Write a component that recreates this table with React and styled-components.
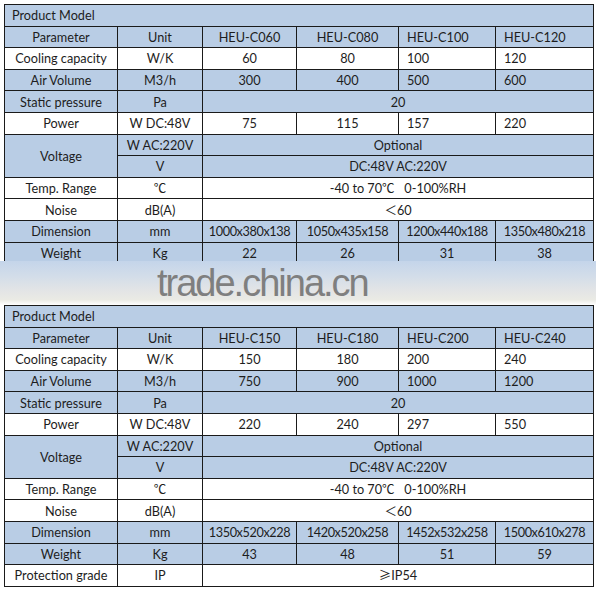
import React from "react";
import styled, { createGlobalStyle } from "styled-components";

const Global = createGlobalStyle`
  html, body { margin: 0; padding: 0; background: #ffffff; }
  body { font-family: Lato, "Open Sans", sans-serif; }
`;

const Page = styled.div`
  width: 596px;
  height: 590px;
  padding: 4px 0 0 4px;
  box-sizing: border-box;
  overflow: hidden;
`;

const Clip = styled.div`
  height: ${(p) => p.$h}px;
  overflow: hidden;
`;

const Table = styled.table`
  border-collapse: collapse;
  width: 589px;
  table-layout: fixed;
  font-family: Lato, "Noto Sans CJK SC", sans-serif;
  font-size: 12.7px;
  color: #1d1d1d;
`;

const Row = styled.tr`
  height: 21.6px;
  background: ${(p) => (p.$blue ? "#b9cde5" : "#ffffff")};
`;

const Cell = styled.td`
  border: 1px solid #1a1a1a;
  padding: ${(p) => (p.$left ? "0 0 0 8px" : p.$title ? "0 0 0 7px" : "0")};
  text-align: ${(p) => (p.$left || p.$title ? "left" : "center")};
  letter-spacing: ${(p) => (p.$tight ? "-0.4px" : "0")};
  white-space: nowrap;
  line-height: 20px;
  vertical-align: middle;
`;

const Cjk = styled.span`
  font-family: "Noto Sans CJK SC", sans-serif;
  font-size: 12.5px;
`;

const Band = styled.div`
  height: 44px;
  margin-left: -4px;
  width: 596px;
  background: linear-gradient(
    to bottom,
    #c4d5ea 0%,
    #d3dde9 35%,
    #e2e4e6 65%,
    #eaeae4 88%,
    #ffffff 100%
  );
  display: flex;
  align-items: center;
  padding-left: 157px;
  box-sizing: border-box;
`;

const Mark = styled.span`
  font-family: "Liberation Sans", Arial, sans-serif;
  font-size: 38px;
  letter-spacing: -2px;
  color: #7f7f7f;
  margin-top: 0px;
`;

const Cols = () => (
  <colgroup>
    {[113, 85, 94, 102, 97, 98].map((w, i) => (
      <col key={i} style={{ width: w }} />
    ))}
  </colgroup>
);

function Spec({ models, cooling, air, power, dims, weights, protection }) {
  const leftIdx = (i) => i >= 2;
  const valueRow = (label, unit, vals, blue) => (
    <Row $blue={blue}>
      <Cell>{label}</Cell>
      <Cell>{unit}</Cell>
      {vals.map((v, i) => (
        <Cell key={i} $left={leftIdx(i)}>
          {v}
        </Cell>
      ))}
    </Row>
  );
  const centerRow = (label, unit, vals, blue, tight) => (
    <Row $blue={blue}>
      <Cell>{label}</Cell>
      <Cell>{unit}</Cell>
      {vals.map((v, i) => (
        <Cell key={i} $tight={tight}>
          {v}
        </Cell>
      ))}
    </Row>
  );
  const spanRow = (label, unit, content, blue) => (
    <Row $blue={blue}>
      <Cell>{label}</Cell>
      <Cell>{unit}</Cell>
      <Cell colSpan={4}>{content}</Cell>
    </Row>
  );
  return (
    <Table>
      <Cols />
      <tbody>
        <Row $blue>
          <Cell colSpan={6} $title>
            Product Model
          </Cell>
        </Row>
        {valueRow("Parameter", "Unit", models, true)}
        {valueRow("Cooling capacity", "W/K", cooling, false)}
        {valueRow("Air Volume", "M3/h", air, true)}
        {spanRow("Static pressure", "Pa", "20", true)}
        {valueRow("Power", "W DC:48V", power, false)}
        <Row $blue>
          <Cell rowSpan={2}>Voltage</Cell>
          <Cell>W AC:220V</Cell>
          <Cell colSpan={4}>Optional</Cell>
        </Row>
        <Row $blue>
          <Cell>V</Cell>
          <Cell colSpan={4}>DC:48V AC:220V</Cell>
        </Row>
        {spanRow(
          "Temp. Range",
          <Cjk>℃</Cjk>,
          <>
            -40 to 70<Cjk>℃</Cjk>&nbsp;&nbsp;&nbsp;0-100%RH
          </>,
          false
        )}
        {spanRow(
          "Noise",
          "dB(A)",
          <>
            <Cjk>＜</Cjk>60
          </>,
          false
        )}
        {centerRow("Dimension", "mm", dims, true, true)}
        {centerRow("Weight", "Kg", weights, true)}
        {protection &&
          spanRow(
            "Protection grade",
            "IP",
            <>
              <Cjk>≥</Cjk>IP54
            </>,
            false
          )}
      </tbody>
    </Table>
  );
}

export default function App() {
  return (
    <>
      <Global />
      <Page>
        <Clip $h={257}>
          <Spec
            models={["HEU-C060", "HEU-C080", "HEU-C100", "HEU-C120"]}
            cooling={["60", "80", "100", "120"]}
            air={["300", "400", "500", "600"]}
            power={["75", "115", "157", "220"]}
            dims={["1000x380x138", "1050x435x158", "1200x440x188", "1350x480x218"]}
            weights={["22", "26", "31", "38"]}
          />
        </Clip>
        <Band>
          <Mark>trade.china.cn</Mark>
        </Band>
        <Spec
          models={["HEU-C150", "HEU-C180", "HEU-C200", "HEU-C240"]}
          cooling={["150", "180", "200", "240"]}
          air={["750", "900", "1000", "1200"]}
          power={["220", "240", "297", "550"]}
          dims={["1350x520x228", "1420x520x258", "1452x532x258", "1500x610x278"]}
          weights={["43", "48", "51", "59"]}
          protection
        />
      </Page>
    </>
  );
}
